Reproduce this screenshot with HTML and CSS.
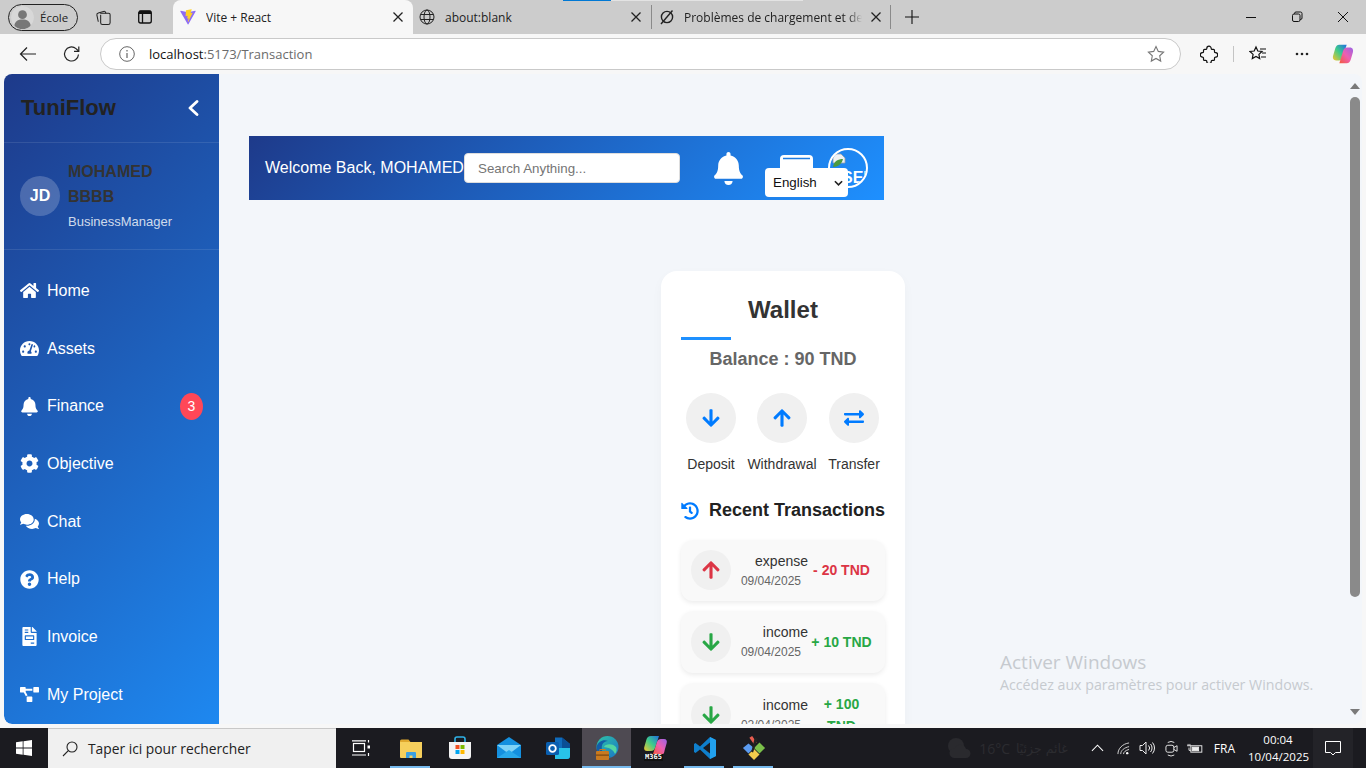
FILE: index.html
```html
<!DOCTYPE html>
<html lang="en">
<head>
  <meta charset="UTF-8">
  <title>Vite + React</title>
  <link rel="stylesheet" href="styles.css">
</head>
<body>
  <svg class="sprite" width="0" height="0">
    <symbol id="arrow-up" viewBox="0 0 448 512"><path d="M34.9 289.5l-22.2-22.2c-9.4-9.4-9.4-24.6 0-33.9L207 39c9.4-9.4 24.6-9.4 33.9 0l194.3 194.3c9.4 9.4 9.4 24.6 0 33.9L413 289.4c-9.5 9.5-25 9.3-34.3-.4L264 168.6V456c0 13.3-10.7 24-24 24h-32c-13.3 0-24-10.7-24-24V168.6L69.2 289.1c-9.3 9.8-24.8 10-34.3.4z"/></symbol>
    <symbol id="arrow-down" viewBox="0 0 448 512"><path transform="rotate(180 224 256)" d="M34.9 289.5l-22.2-22.2c-9.4-9.4-9.4-24.6 0-33.9L207 39c9.4-9.4 24.6-9.4 33.9 0l194.3 194.3c9.4 9.4 9.4 24.6 0 33.9L413 289.4c-9.5 9.5-25 9.3-34.3-.4L264 168.6V456c0 13.3-10.7 24-24 24h-32c-13.3 0-24-10.7-24-24V168.6L69.2 289.1c-9.3 9.8-24.8 10-34.3.4z"/></symbol>
    <symbol id="bell" viewBox="0 0 448 512"><path d="M224 512c35.32 0 63.97-28.65 63.97-64H160.03c0 35.35 28.65 64 63.97 64zm215.39-149.71c-19.32-20.76-55.47-51.99-55.47-154.29 0-77.7-54.48-139.9-127.94-155.16V32c0-17.67-14.32-32-31.98-32s-31.98 14.33-31.98 32v20.84C118.56 68.1 64.08 130.3 64.08 208c0 102.3-36.15 133.53-55.47 154.29-6 6.45-8.66 14.16-8.61 21.71.11 16.4 12.98 32 32.1 32h383.8c19.12 0 32-15.6 32.1-32 .05-7.55-2.61-15.27-8.61-21.71z"/></symbol>
    <symbol id="close" viewBox="0 0 12 12"><path d="M1.5 1.5l9 9M10.5 1.5l-9 9" fill="none" stroke="currentColor" stroke-width="1.3"/></symbol>
  </svg>

  <div class="tabstrip">
    <div class="progress"><span class="progress-blue"></span><span class="progress-grey"></span></div>
    <div class="profile">
      <svg class="profile-pic" viewBox="0 0 24 24"><circle cx="12" cy="12" r="12" fill="#d8d8d8"/><circle cx="12" cy="9" r="4.6" fill="#777"/><path d="M3.5 21c0-5 4-7 8.5-7s8.5 2 8.5 7c-2 2-5 3-8.5 3s-6.5-1-8.5-3z" fill="#777"/></svg>
      <span>École</span>
    </div>
    <svg class="strip-icon collections" viewBox="0 0 18 18" fill="none" stroke="#222" stroke-width="1.1"><path d="M5.5 4.5h9a1.5 1.5 0 0 1 1.5 1.500v8.500a2 2 0 0 1-2 2H8a2 2 0 0 1-2-2V6"/><path d="M3.5 13.5L2 6.5c-.3-1.300.4-2 1.500-2.300L9 2.600c1-.3 2 .2 2.300 1.200l.3.800"/></svg>
    <svg class="strip-icon sidebar-toggle" viewBox="0 0 16 16" fill="none" stroke="#111" stroke-width="1.3"><rect x="1.7" y="2" width="12.6" height="12" rx="2"/><path d="M1.7 4.3h12.6M5.500 4.300V14"/><path d="M2 3h12" stroke-width="2.5"/></svg>

    <div class="tab tab-active">
      <svg class="favicon" viewBox="0 0 410 404"><path d="M399.6 59.5L215.1 389.4c-3.800 6.800-13.600 6.800-17.500.1L9.500 59.500c-4.200-7.400 2.100-16.300 10.400-14.800l184.700 33c1.200.2 2.400.2 3.600 0l180.800-33c8.300-1.500 14.600 7.300 10.600 14.800z" fill="#8d6cf6"/><path d="M292.9 1.6L156.4 28.3c-2.200.4-3.900 2.300-4 4.600l-8.400 142c-.2 3.300 2.900 5.900 6.100 5.200l38-8.800c3.600-.8 6.800 2.300 6.100 5.900l-11.300 55.300c-.8 3.700 2.700 6.900 6.300 5.800l23.500-7.100c3.600-1.100 7.100 2.100 6.300 5.800l-18 87c-1.100 5.400 6.100 8.400 9.100 3.700l2-3.100 111.400-222.300c1.900-3.700-1.300-8-5.400-7.200l-39.200 7.600c-3.700.700-6.800-2.700-5.800-6.300l25.600-88.700c1-3.600-2.100-7.100-5.800-6.300z" fill="#ffd028"/></svg>
      <span class="tab-title">Vite + React</span>
      <svg class="tab-close"><use href="#close"/></svg>
    </div>
    <div class="tab tab-second">
      <svg class="favicon" viewBox="0 0 16 16" fill="none" stroke="#222" stroke-width="1"><circle cx="8" cy="8" r="7"/><ellipse cx="8" cy="8" rx="3" ry="7"/><path d="M1.5 5.5h13M1.5 10.5h13"/></svg>
      <span class="tab-title">about:blank</span>
      <svg class="tab-close"><use href="#close"/></svg>
    </div>
    <div class="tab tab-third">
      <svg class="favicon" viewBox="0 0 16 16" fill="none" stroke="#222" stroke-width="1.4"><circle cx="8" cy="8" r="5.6"/><path d="M13.5 1.5L2 15"/></svg>
      <span class="tab-title tab-fade">Problèmes de chargement et de c</span>
      <svg class="tab-close"><use href="#close"/></svg>
    </div>
    <svg class="new-tab" viewBox="0 0 14 14" fill="none" stroke="#111" stroke-width="1.1"><path d="M7 0v14M0 7h14"/></svg>
    <div class="window-controls">
      <svg viewBox="0 0 12 12" fill="none" stroke="#111"><path d="M1 6.5h10"/></svg>
      <svg viewBox="0 0 12 12" fill="none" stroke="#111"><rect x="1.5" y="3" width="7.5" height="7.5" rx="1.5"/><path d="M3.5 3V2.500A1.500 1.500 0 0 1 5 1h4.500A1.500 1.500 0 0 1 11 2.500V7a1.500 1.500 0 0 1-1.500 1.500H9"/></svg>
      <svg viewBox="0 0 12 12" fill="none" stroke="#111"><path d="M1 1l10 10M11 1L1 11"/></svg>
    </div>
  </div>

  <div class="toolbar">
    <svg class="tool-icon back" viewBox="0 0 18 18" fill="none" stroke="#222" stroke-width="1.2"><path d="M17 9H1.5M8 2.5L1.5 9 8 15.5"/></svg>
    <svg class="tool-icon reload" viewBox="0 0 18 18" fill="none" stroke="#222" stroke-width="1.2"><path d="M15.5 9.5A7 7 0 1 1 13 3.6L15.5 6"/><path d="M15.8 1.5V6.3H11"/></svg>
    <div class="address">
      <svg class="info" viewBox="0 0 16 16" fill="none" stroke="#666"><circle cx="8" cy="8" r="7.3"/><path d="M8 7v5M8 4v1.5" stroke-width="1.2"/></svg>
      <span class="url"><span class="url-host">localhost</span>:5173/Transaction</span>
      <svg class="star" viewBox="0 0 18 18" fill="none" stroke="#777" stroke-width="1.1"><path d="M9 1.5l2.300 4.900 5.300.7-3.900 3.700 1 5.300L9 13.500l-4.700 2.600 1-5.300L1.400 7.100l5.300-.7z"/></svg>
    </div>
    <svg class="tool-icon extensions" viewBox="0 0 18 18" fill="none" stroke="#111" stroke-width="1.2"><path d="M6.800 3.400a2.200 2.200 0 1 1 4.400 0c0 .7.4 1 1 1h1.300a1 1 0 0 1 1 1v1.300c0 .6.300 1 1 1a2.200 2.200 0 1 1 0 4.400c-.7 0-1 .4-1 1v1.300a1 1 0 0 1-1 1h-1.300c-.6 0-1 .3-1 1a2.200 2.200 0 1 1-4.400 0c0-.7-.4-1-1-1H4.500a1 1 0 0 1-1-1v-1.300c0-.6-.3-1-1-1a2.200 2.200 0 1 1 0-4.400c.7 0 1-.4 1-1V5.400a1 1 0 0 1 1-1h1.300c.6 0 1-.3 1-1z"/></svg>
    <span class="tool-divider"></span>
    <svg class="tool-icon favorites" viewBox="0 0 18 18" fill="none" stroke="#111" stroke-width="1.2"><path d="M7 2l1.800 4 4.200.5-3.100 2.900.8 4.200L7 11.500l-3.700 2.100.8-4.200L1 6.500 5.200 6z"/><path d="M11 4h6M13 8h4M12 12h5"/></svg>
    <svg class="tool-icon dots" viewBox="0 0 14 4" fill="#222"><circle cx="2" cy="2" r="1.3"/><circle cx="7" cy="2" r="1.3"/><circle cx="12" cy="2" r="1.3"/></svg>
    <svg class="tool-icon copilot" viewBox="0 0 24 24">
      <defs>
        <linearGradient id="cop-a" x1="0" y1="1" x2="1" y2="0"><stop offset="0" stop-color="#f7c52c"/><stop offset=".5" stop-color="#3ecb8b"/><stop offset="1" stop-color="#1f6fe0"/></linearGradient>
        <linearGradient id="cop-b" x1="0" y1="1" x2="1" y2="0"><stop offset="0" stop-color="#f45a3c"/><stop offset=".5" stop-color="#ee5fb0"/><stop offset="1" stop-color="#9a63e6"/></linearGradient>
      </defs>
      <path d="M8 2h8l-4 13c-.7 2.300-2 4-4.500 4H4.500C1.500 19 .5 16.500 1.200 14L3.500 6C4.300 3.500 5.500 2 8 2z" fill="url(#cop-a)"/>
      <path d="M16 22H8l4-13c.7-2.300 2-4 4.500-4h3c3 0 4 2.500 3.300 5l-2.300 8C19.700 20.500 18.500 22 16 22z" fill="url(#cop-b)"/>
    </svg>
  </div>

  <div class="viewport">
    <div class="page">
      <aside class="sidebar">
        <div class="brand">
          <span class="brand-name">TuniFlow</span>
          <svg class="brand-toggle" viewBox="0 0 12 16" fill="none" stroke="#fff" stroke-width="2.8" stroke-linecap="round" stroke-linejoin="round"><path d="M10 1.5L3 8l7 6.500"/></svg>
        </div>
        <div class="user">
          <div class="user-avatar">JD</div>
          <div class="user-info">
            <div class="user-name">MOHAMED BBBB</div>
            <div class="user-role">BusinessManager</div>
          </div>
        </div>
        <nav class="nav">
          <a class="nav-item"><svg class="nav-icon" viewBox="0 0 576 512"><path d="M280.37 148.26L96 300.11V464a16 16 0 0 0 16 16l112.06-.29a16 16 0 0 0 15.92-16V368a16 16 0 0 1 16-16h64a16 16 0 0 1 16 16v95.64a16 16 0 0 0 16 16.05L464 480a16 16 0 0 0 16-16V300L295.67 148.26a12.19 12.19 0 0 0-15.3 0zM571.6 251.47L488 182.56V44.05a12 12 0 0 0-12-12h-56a12 12 0 0 0-12 12v72.61L318.47 43a48 48 0 0 0-61 0L4.34 251.47a12 12 0 0 0-1.6 16.9l25.5 31A12 12 0 0 0 45.15 301l235.22-193.74a12.19 12.19 0 0 1 15.3 0L530.9 301a12 12 0 0 0 16.9-1.6l25.5-31a12 12 0 0 0-1.7-16.93z"/></svg>Home</a>
          <a class="nav-item"><svg class="nav-icon" viewBox="0 0 576 512"><path d="M288 32C128.94 32 0 160.94 0 320c0 52.8 14.25 102.26 39.06 144.8 5.61 9.62 16.3 15.2 27.44 15.2h443c11.14 0 21.83-5.58 27.44-15.2C561.75 422.26 576 372.8 576 320c0-159.06-128.94-288-288-288zm0 64c14.71 0 26.58 10.13 30.32 23.65-1.11 2.26-2.64 4.23-3.45 6.67l-9.22 27.67c-5.13 3.49-10.97 6.01-17.64 6.01-17.67 0-32-14.33-32-32S270.33 96 288 96zM96 384c-17.67 0-32-14.33-32-32s14.33-32 32-32 32 14.33 32 32-14.33 32-32 32zm48-160c-17.67 0-32-14.33-32-32s14.33-32 32-32 32 14.33 32 32-14.33 32-32 32zm246.77-72.41l-61.33 184C343.13 347.33 352 364.54 352 384c0 11.72-3.38 22.55-8.88 32H232.88c-5.5-9.45-8.88-20.28-8.88-32 0-33.94 26.5-61.43 59.9-63.59l61.34-184.01c4.17-12.56 17.73-19.45 30.36-15.17 12.57 4.19 19.35 17.79 15.17 30.36zm14.66 57.2l15.52-46.55c3.47-1.29 7.13-2.23 11.05-2.23 17.67 0 32 14.33 32 32s-14.33 32-32 32c-11.38-.01-20.89-6.27-26.57-15.22zM480 384c-17.67 0-32-14.33-32-32s14.33-32 32-32 32 14.33 32 32-14.33 32-32 32z"/></svg>Assets</a>
          <a class="nav-item"><svg class="nav-icon"><use href="#bell"/></svg>Finance<span class="nav-badge">3</span></a>
          <a class="nav-item"><svg class="nav-icon" viewBox="0 0 512 512"><path d="M487.4 315.7l-42.6-24.6c4.3-23.2 4.3-47 0-70.2l42.6-24.6c4.9-2.8 7.1-8.6 5.5-14-11.1-35.6-30-67.8-54.7-94.6-3.8-4.1-10-5.1-14.8-2.3L380.8 110c-17.9-15.4-38.5-27.3-60.8-35.1V25.8c0-5.6-3.9-10.5-9.4-11.7-36.7-8.2-74.3-7.8-109.2 0-5.5 1.2-9.4 6.1-9.4 11.7V75c-22.2 7.9-42.8 19.8-60.8 35.1L88.7 85.5c-4.9-2.8-11-1.9-14.8 2.3-24.7 26.7-43.6 58.9-54.7 94.6-1.7 5.4.6 11.2 5.5 14L67.3 221c-4.3 23.2-4.3 47 0 70.2l-42.6 24.6c-4.9 2.8-7.1 8.6-5.5 14 11.1 35.6 30 67.8 54.7 94.6 3.8 4.1 10 5.1 14.8 2.3l42.6-24.6c17.9 15.4 38.5 27.3 60.8 35.1v49.2c0 5.6 3.9 10.5 9.4 11.7 36.7 8.2 74.3 7.8 109.2 0 5.5-1.2 9.4-6.1 9.4-11.7v-49.2c22.2-7.9 42.8-19.8 60.8-35.1l42.6 24.6c4.9 2.8 11 1.9 14.8-2.3 24.7-26.7 43.6-58.9 54.7-94.6 1.5-5.5-.7-11.3-5.6-14.1zM256 336c-44.1 0-80-35.9-80-80s35.9-80 80-80 80 35.9 80 80-35.9 80-80 80z"/></svg>Objective</a>
          <a class="nav-item"><svg class="nav-icon" viewBox="0 0 576 512"><path d="M416 192c0-88.4-93.1-160-208-160S0 103.6 0 192c0 34.3 14.1 65.9 38 92-13.4 30.2-35.5 54.2-35.8 54.5-2.2 2.3-2.8 5.7-1.5 8.7S4.8 352 8 352c36.6 0 66.9-12.3 88.7-25 32.2 15.7 70.3 25 111.3 25 114.9 0 208-71.6 208-160zm122 220c23.9-26 38-57.7 38-92 0-66.9-53.5-124.2-129.3-148.1.9 6.6 1.3 13.3 1.3 20.1 0 105.9-107.7 192-240 192-10.8 0-21.3-.8-31.7-1.9C207.8 439.6 281.8 480 368 480c41 0 79.1-9.2 111.3-25 21.8 12.7 52.1 25 88.7 25 3.2 0 6.1-1.9 7.3-4.8 1.3-2.9.7-6.3-1.5-8.7-.3-.3-22.4-24.2-35.8-54.5z"/></svg>Chat</a>
          <a class="nav-item"><svg class="nav-icon" viewBox="0 0 512 512"><path d="M504 256c0 136.997-111.043 248-248 248S8 392.997 8 256C8 119.083 119.043 8 256 8s248 111.083 248 248zM262.655 90c-54.497 0-89.255 22.957-116.549 63.758-3.536 5.286-2.353 12.415 2.715 16.258l34.699 26.31c5.205 3.947 12.621 3.008 16.665-2.122 17.864-22.658 30.113-35.797 57.303-35.797 20.429 0 45.698 13.148 45.698 32.958 0 14.976-12.363 22.667-32.534 33.976C247.128 238.528 216 254.941 216 296v4c0 6.627 5.373 12 12 12h56c6.627 0 12-5.373 12-12v-1.333c0-28.462 83.186-29.647 83.186-106.667 0-58.002-60.165-102-116.531-102zM256 338c-25.365 0-46 20.635-46 46 0 25.364 20.635 46 46 46s46-20.636 46-46c0-25.365-20.635-46-46-46z"/></svg>Help</a>
          <a class="nav-item"><svg class="nav-icon" viewBox="0 0 384 512"><path d="M288 256H96v64h192v-64zm89-151L279.1 7c-4.5-4.5-10.6-7-17-7H256v128h128v-6.1c0-6.3-2.5-12.4-7-16.9zm-153 31V0H24C10.7 0 0 10.7 0 24v464c0 13.3 10.7 24 24 24h336c13.3 0 24-10.7 24-24V160H248c-13.2 0-24-10.8-24-24zM64 72c0-4.42 3.58-8 8-8h80c4.42 0 8 3.58 8 8v16c0 4.42-3.58 8-8 8H72c-4.42 0-8-3.58-8-8V72zm0 64c0-4.42 3.58-8 8-8h80c4.42 0 8 3.58 8 8v16c0 4.42-3.58 8-8 8H72c-4.42 0-8-3.58-8-8v-16zm256 304c0 4.42-3.58 8-8 8h-80c-4.42 0-8-3.58-8-8v-16c0-4.42 3.58-8 8-8h80c4.42 0 8 3.58 8 8v16zm0-200v96c0 8.84-7.16 16-16 16H80c-8.84 0-16-7.16-16-16v-96c0-8.84 7.16-16 16-16h224c8.84 0 16 7.16 16 16z"/></svg>Invoice</a>
          <a class="nav-item"><svg class="nav-icon" viewBox="0 0 640 512"><path d="M384 320H256c-17.67 0-32 14.33-32 32v128c0 17.67 14.33 32 32 32h128c17.67 0 32-14.33 32-32V352c0-17.67-14.33-32-32-32zM192 32c0-17.67-14.33-32-32-32H32C14.33 0 0 14.33 0 32v128c0 17.67 14.33 32 32 32h95.72l73.16 128.04C211.98 300.98 232.4 288 256 288h.28L192 175.51V128h224V64H192V32zM608 0H480c-17.67 0-32 14.33-32 32v128c0 17.67 14.33 32 32 32h128c17.67 0 32-14.33 32-32V32c0-17.67-14.33-32-32-32z"/></svg>My Project</a>
        </nav>
      </aside>

      <main class="main">
        <header class="topbar">
          <span class="welcome">Welcome Back, MOHAMED</span>
          <input class="search" type="text" placeholder="Search Anything...">
          <svg class="topbar-bell"><use href="#bell"/></svg>
          <svg class="topbar-wallet" viewBox="0 0 33 26"><path d="M4 0h25a4 4 0 0 1 4 4v22H0V4a4 4 0 0 1 4-4z" fill="#fff"/><path d="M3 3.500h27" stroke="#1e7be0" stroke-width="1.5"/></svg>
          <div class="topbar-avatar">
            <svg class="broken-img" viewBox="0 0 16 16"><path d="M2 1h8l4 4v5H2z" fill="#eef1f4" stroke="#9aa0a6" stroke-width=".8"/><path d="M2 14c1-6 5-8 10-8-1 4-4 8-10 8z" fill="#4d9a3f"/></svg>
            <span class="avatar-alt">SEI</span>
          </div>
          <div class="lang-select"><span>English</span><svg viewBox="0 0 10 6" fill="none" stroke="#222" stroke-width="1.8"><path d="M1 1l4 4 4-4"/></svg></div>
        </header>

        <section class="wallet">
          <h2 class="wallet-title">Wallet</h2>
          <div class="wallet-rule"></div>
          <p class="balance">Balance : 90 TND</p>
          <div class="actions">
            <div class="action action-deposit">
              <span class="action-circle"><svg class="action-icon"><use href="#arrow-down"/></svg></span>
              <span class="action-label">Deposit</span>
            </div>
            <div class="action action-withdraw">
              <span class="action-circle"><svg class="action-icon"><use href="#arrow-up"/></svg></span>
              <span class="action-label">Withdrawal</span>
            </div>
            <div class="action action-transfer">
              <span class="action-circle"><svg class="action-icon" viewBox="0 0 512 512"><path d="M0 168v-16c0-13.255 10.745-24 24-24h360V80c0-21.367 25.899-32.042 40.971-16.971l80 80c9.372 9.373 9.372 24.569 0 33.941l-80 80C409.956 271.982 384 261.456 384 240v-48H24c-13.255 0-24-10.745-24-24zm488 152H128v-48c0-21.314-25.862-32.08-40.971-16.971l-80 80c-9.372 9.373-9.372 24.569 0 33.941l80 80C102.057 463.997 128 453.437 128 432v-48h360c13.255 0 24-10.745 24-24v-16c0-13.255-10.745-24-24-24z"/></svg></span>
              <span class="action-label">Transfer</span>
            </div>
          </div>
          <h3 class="recent">
            <svg class="recent-icon" viewBox="0 0 512 512"><path d="M504 255.531c.253 136.64-111.18 248.372-247.82 248.468-59.015.042-113.223-20.53-155.822-54.911-11.077-8.94-11.905-25.541-1.839-35.607l11.267-11.267c8.609-8.609 22.353-9.551 31.891-1.984C173.062 425.135 212.781 440 256 440c101.705 0 184-82.311 184-184 0-101.705-82.311-184-184-184-48.814 0-93.149 18.969-126.068 49.932l50.754 50.754c10.08 10.08 2.941 27.314-11.313 27.314H24c-8.837 0-16-7.163-16-16V38.627c0-14.254 17.234-21.393 27.314-11.314l49.372 49.372C129.209 34.136 189.552 8 256 8c136.81 0 247.747 110.78 248 247.531zm-180.912 78.784l9.823-12.63c8.138-10.463 6.253-25.542-4.21-33.679L288 256.349V152c0-13.255-10.745-24-24-24h-16c-13.255 0-24 10.745-24 24v135.651l65.409 50.874c10.463 8.137 25.541 6.253 33.679-4.21z"/></svg>
            Recent Transactions
          </h3>
          <div class="tx">
            <span class="tx-circle tx-red"><svg class="tx-icon"><use href="#arrow-up"/></svg></span>
            <div class="tx-details"><div class="tx-type">expense</div><div class="tx-date">09/04/2025</div></div>
            <div class="tx-amount tx-red">- 20 TND</div>
          </div>
          <div class="tx">
            <span class="tx-circle tx-green"><svg class="tx-icon"><use href="#arrow-down"/></svg></span>
            <div class="tx-details"><div class="tx-type">income</div><div class="tx-date">09/04/2025</div></div>
            <div class="tx-amount tx-green">+ 10 TND</div>
          </div>
          <div class="tx">
            <span class="tx-circle tx-green"><svg class="tx-icon"><use href="#arrow-down"/></svg></span>
            <div class="tx-details"><div class="tx-type">income</div><div class="tx-date">02/04/2025</div></div>
            <div class="tx-amount tx-green">+ 100 TND</div>
          </div>
        </section>

        <div class="watermark">
          <div class="watermark-title">Activer Windows</div>
          <div class="watermark-text">Accédez aux paramètres pour activer Windows.</div>
        </div>
      </main>

      <div class="scrollbar">
        <svg viewBox="0 0 10 6" fill="#7a7a7a"><path d="M5 0l5 6H0z"/></svg>
        <div class="scroll-track"><div class="scroll-thumb"></div></div>
        <svg viewBox="0 0 10 6" fill="#7a7a7a"><path d="M5 6L0 0h10z"/></svg>
      </div>
    </div>
  </div>

  <footer class="taskbar">
    <div class="start"><svg viewBox="0 0 16 16" fill="#fff"><path d="M0 2.300l6.700-1v6.300H0zM7.500 1.200L16 0v7.600H7.500zM0 8.400h6.700v6.300l-6.700-1zM7.500 8.400H16V16l-8.500-1.200z"/></svg></div>
    <div class="task-search">
      <svg viewBox="0 0 16 16" fill="none" stroke="#222" stroke-width="1.1"><circle cx="10" cy="6" r="5"/><path d="M6.300 9.700L1 15"/></svg>
      <span>Taper ici pour rechercher</span>
    </div>
    <div class="task-view"><svg viewBox="0 0 18 16" fill="none" stroke="#fff" stroke-width="1.2"><rect x="1.5" y="3.5" width="11" height="8"/><path d="M0 .8h14M0 15h14M16.500 0v2.500M16.500 13v3"/><rect x="15.5" y="5.5" width="2.5" height="3" fill="#fff" stroke="none"/></svg></div>

    <div class="task-app app-open">
      <svg viewBox="0 0 24 24"><path d="M1 5a1.500 1.500 0 0 1 1.500-1.500h7l2 2.500H1z" fill="#e0a82e"/><path d="M1 6h22v15a1 1 0 0 1-1 1H2a1 1 0 0 1-1-1z" fill="#f6cf5c"/><path d="M7 17a1 1 0 0 1 1-1h8a1 1 0 0 1 1 1v5h-3.500v-2.500h-3V22H7z" fill="#3c9fe0"/></svg>
    </div>
    <div class="task-app">
      <svg viewBox="0 0 24 24"><path d="M7 6V3a2 2 0 0 1 2-2h6a2 2 0 0 1 2 2v3" fill="none" stroke="#2fb3e8" stroke-width="1.6"/><path d="M1 6h22v14a3 3 0 0 1-3 3H4a3 3 0 0 1-3-3z" fill="#f4f4f4"/><rect x="7.5" y="9" width="4" height="4" fill="#f25022"/><rect x="12.5" y="9" width="4" height="4" fill="#7fba00"/><rect x="7.5" y="14" width="4" height="4" fill="#00a4ef"/><rect x="12.5" y="14" width="4" height="4" fill="#ffb900"/></svg>
    </div>
    <div class="task-app">
      <svg viewBox="0 0 24 24"><path d="M0 9l12-8 12 8v13H0z" fill="#1490df"/><path d="M0 9h24l-12 9z" fill="#7fd3f7"/><path d="M0 22l12-8 12 8z" fill="#28a8ea"/></svg>
    </div>
    <div class="task-app">
      <svg viewBox="0 0 24 24"><path d="M9 1.500h7L24 8v12a3 3 0 0 1-3 3H9z" fill="#0f6cbd"/><path d="M16 1.500L24 8v6H16z" fill="#0a4f96"/><path d="M9 12h15v8a3 3 0 0 1-3 3H9z" fill="#28c3e8"/><rect x="0" y="6" width="13" height="13" rx="1.5" fill="#0a5fb0"/><circle cx="6.5" cy="12.5" r="3.3" fill="none" stroke="#fff" stroke-width="1.8"/></svg>
    </div>
    <div class="task-app app-active">
      <svg viewBox="0 0 24 24">
        <defs><linearGradient id="edge-a" x1="0" y1="0" x2="1" y2="1"><stop offset="0" stop-color="#2ec4a6"/><stop offset="1" stop-color="#1a75c7"/></linearGradient></defs>
        <circle cx="12.5" cy="11" r="11" fill="url(#edge-a)"/>
        <path d="M1.500 11C3 5 9 3 13 5c-5 .5-7 4-6 9 .8 4 4 7 9 6.500-6 3-14 0-14.500-9.500z" fill="#135ea8"/>
        <path d="M9 11c1-3 8-4 12 0 1 2 1 5-1 7-1-3-4-6-11-7z" fill="#53d5a2"/>
        <rect x="1" y="15" width="13" height="9" rx="1" fill="#c97a20"/>
        <rect x="1" y="18.5" width="13" height="1.2" fill="#7a4610"/>
        <rect x="5" y="13.5" width="5" height="2" fill="none" stroke="#c97a20"/>
      </svg>
    </div>
    <div class="task-app">
      <svg class="m365-icon" viewBox="0 0 24 18"><path d="M7 0h8l-4 12c-.6 2-2 3-4 3H3c-2.500 0-3.300-2-2.700-4l2-7C3 1.500 4.500 0 7 0z" fill="url(#cop-a)"/><path d="M18 18H9l4-12c.6-2 2-3 4-3h3c2.500 0 3.300 2 2.700 4l-2 7C20 16.500 20.500 18 18 18z" fill="url(#cop-b)"/></svg>
      <span class="m365-label">M365</span>
    </div>
    <div class="task-app app-open">
      <svg viewBox="0 0 24 24"><path d="M17 1l6 3v16l-6 3L7 13.500 2.500 17 1 16V8l1.500-1L7 10.500z" fill="#0f7fcc"/><path d="M17 6.500L10 12l7 5.500z" fill="#1b1b1f"/><path d="M17 1l6 3v16l-6 3z" fill="#22a1ee"/></svg>
    </div>
    <div class="task-app app-open">
      <svg viewBox="0 0 26 26"><path d="M7 8l6 5-6 6-6-6z" fill="#5b9bf0"/><path d="M19 7l6 6-6 6-6-6z" fill="#7bc04a"/><path d="M13 14l6 6-6 6-6-6z" fill="#f2cd4d"/><path d="M8 2l3-2 5 7-3 2z" fill="#e85d50"/><path d="M14 1l3 2-5 15-2-1z" fill="#222"/></svg>
    </div>

    <div class="tray">
      <div class="weather">
        <svg viewBox="0 0 26 22" fill="#2a2a2e"><circle cx="10" cy="9" r="8"/><path d="M8 21a5 5 0 0 1 1-10 6 6 0 0 1 11 1 4.500 4.500 0 0 1 0 9z"/></svg>
        <span>16°C</span><span class="weather-ar" dir="rtl" lang="ar">غائم جزئيًا</span>
      </div>
      <svg class="tray-icon chevron" viewBox="0 0 14 8" fill="none" stroke="#fff" stroke-width="1.1"><path d="M1 7l6-6 6 6"/></svg>
      <svg class="tray-icon wifi" viewBox="0 0 14 14" fill="none" stroke="#ddd"><path d="M1 13C1 7 6 2 13 1M4 13c0-4 4-7 9-8M7 13c0-2 2-4 6-5"/><circle cx="11" cy="12" r="1.3" fill="#fff" stroke="none"/></svg>
      <svg class="tray-icon speaker" viewBox="0 0 16 14" fill="none" stroke="#eee"><path d="M1 4.500h2.500L7 1v12L3.500 9.500H1z"/><path d="M9.500 4.500a3.500 3.500 0 0 1 0 5M11.500 3a6 6 0 0 1 0 8M13.500 1.500a8.500 8.500 0 0 1 0 11"/></svg>
      <svg class="tray-icon meet" viewBox="0 0 14 18" fill="none" stroke="#eee"><rect x="1" y="5.5" width="8.5" height="7.5" rx="2"/><path d="M9.500 8L13 6v6l-3.500-2M3 2.500a6.500 6.500 0 0 1 7 0M3 16a6.500 6.500 0 0 0 7 0"/></svg>
      <svg class="tray-icon battery" viewBox="0 0 18 12" fill="none" stroke="#eee"><rect x="5" y="3" width="12" height="7"/><rect x="6.5" y="4.500" width="7" height="4" fill="#eee"/><path d="M1 3h4M2 1v2M4 1v2M3 5v3h2"/></svg>
      <span class="lang">FRA</span>
      <div class="clock"><div>00:04</div><div>10/04/2025</div></div>
      <div class="notify"><svg viewBox="0 0 16 16" fill="none" stroke="#fff"><path d="M.5 1.500h15v11h-5L8 15l-2.500-2.500h-5z"/></svg></div>
    </div>
  </footer>
</body>
</html>
```

FILE: styles.css
```css
* {
  box-sizing: border-box;
}

html, body {
  height: 100%;
}

body {
  margin: 0;
  height: 768px;
  overflow: hidden;
  display: flex;
  flex-direction: column;
  background-color: #f7f7f7;
  font-family: "Liberation Sans", Arial, sans-serif;
}

.sprite {
  position: absolute;
}

/* browser tabs */
.tabstrip {
  position: relative;
  height: 34px;
  flex: none;
  display: flex;
  align-items: center;
  background-color: #cccccc;
  font-family: "Open Sans", sans-serif;
  font-size: 12px;
  color: #222;
}

.progress {
  position: absolute;
  top: 0;
  left: 563px;
  display: flex;
  height: 1px;
}

.progress-blue {
  width: 48px;
  background-color: #0078d4;
}

.progress-grey {
  width: 192px;
  background-color: #e3e3e3;
}

.profile {
  margin-left: 8px;
  width: 70px;
  height: 27px;
  display: flex;
  align-items: center;
  gap: 6px;
  padding-left: 2px;
  border: 1px solid #222;
  border-radius: 14px;
  font-size: 11.5px;
}

.profile-pic {
  width: 23px;
  height: 23px;
  border-radius: 50%;
}

.strip-icon {
  width: 17px;
  height: 17px;
}

.collections {
  margin-left: 17px;
}

.sidebar-toggle {
  margin-left: 25px;
  width: 16px;
  height: 16px;
}

.tab {
  height: 34px;
  display: flex;
  align-items: center;
}

.tab-active {
  margin-left: 20px;
  width: 240px;
  padding-left: 7px;
  padding-right: 9px;
  background-color: #f7f7f7;
  border-radius: 8px 8px 0 0;
}

.tab-second {
  width: 239px;
  padding-left: 6px;
  padding-right: 9px;
  border-right: 1px solid #8a8a8a;
  height: 24px;
}

.tab-third {
  width: 239px;
  padding-left: 6px;
  padding-right: 8px;
  border-right: 1px solid #8a8a8a;
  height: 24px;
}

.favicon {
  flex: none;
  width: 16px;
  height: 16px;
}

.tab-title {
  flex: 1;
  min-width: 0;
  margin-left: 10px;
  white-space: nowrap;
  overflow: hidden;
}

.tab-third .favicon {
  margin-left: 1px;
}

.tab-third .tab-title {
  margin-left: 9px;
  margin-right: 8px;
}

.tab-fade {
  -webkit-mask-image: linear-gradient(to right, #000 92%, transparent);
  mask-image: linear-gradient(to right, #000 92%, transparent);
}

.tab-close {
  flex: none;
  width: 12px;
  height: 12px;
  color: #222;
}

.new-tab {
  margin-left: 14px;
  width: 14px;
  height: 14px;
}

.window-controls {
  margin-left: auto;
  display: flex;
}

.window-controls svg {
  width: 46px;
  height: 12px;
}

/* address bar row */
.toolbar {
  height: 39px;
  flex: none;
  display: flex;
  align-items: center;
  background-color: #f7f7f7;
}

.tool-icon {
  flex: none;
  width: 18px;
  height: 18px;
}

.back {
  margin-left: 19px;
}

.reload {
  margin-left: 26px;
}

.address {
  margin-left: 19px;
  width: 1081px;
  height: 32px;
  display: flex;
  align-items: center;
  padding: 0 15px 0 18px;
  background-color: #fff;
  border: 1px solid #c9c9c9;
  border-radius: 16px;
  font-family: "Open Sans", sans-serif;
  font-size: 13px;
  color: #6b6b6b;
}

.info {
  width: 16px;
  height: 16px;
}

.url {
  margin-left: 14px;
  flex: 1;
}

.url-host {
  color: #111;
}

.star {
  width: 18px;
  height: 18px;
}

.extensions {
  margin-left: 19px;
}

.tool-divider {
  margin-left: 15px;
  width: 1px;
  height: 16px;
  background-color: #c4c4c4;
}

.favorites {
  margin-left: 15px;
}

.dots {
  margin-left: 28px;
  width: 14px;
  height: 4px;
}

.copilot {
  margin-left: 23px;
  width: 22px;
  height: 22px;
}

/* the app inside the browser */
.viewport {
  height: 655px;
  flex: none;
  padding: 1px 4px 4px;
}

.page {
  height: 650px;
  display: flex;
  overflow: hidden;
  border-radius: 8px;
  background-color: #f3f6fa;
}

.sidebar {
  width: 215px;
  flex: none;
  background: linear-gradient(135deg, #1e3a8a, #1e88f0);
  color: #fff;
  border-radius: 0 0 0 8px;
}

.brand {
  height: 69px;
  display: flex;
  align-items: center;
  justify-content: space-between;
  padding: 0 20px 0 17px;
  border-bottom: 1px solid rgba(255, 255, 255, 0.1);
}

.brand-name {
  font-size: 22px;
  font-weight: bold;
  color: #222;
}

.brand-toggle {
  width: 12px;
  height: 16px;
}

.user {
  height: 107px;
  display: flex;
  align-items: center;
  gap: 8px;
  padding: 0 16px;
  border-bottom: 1px solid rgba(255, 255, 255, 0.1);
}

.user-avatar {
  flex: none;
  width: 40px;
  height: 40px;
  display: flex;
  align-items: center;
  justify-content: center;
  border-radius: 50%;
  background-color: rgba(255, 255, 255, 0.2);
  font-size: 16px;
  font-weight: bold;
}

.user-info {
  padding-bottom: 4px;
}

.user-name {
  font-size: 16px;
  line-height: 25px;
  font-weight: bold;
  color: #333;
}

.user-role {
  margin-top: 5px;
  font-size: 13px;
  line-height: 15px;
  color: rgba(255, 255, 255, 0.8);
}

.nav {
  padding-top: 12px;
}

.nav-item {
  height: 57.7px;
  display: flex;
  align-items: center;
  padding: 0 16px;
  font-size: 16px;
}

.nav-icon {
  flex: none;
  width: 19px;
  height: 19px;
  margin-right: 8px;
  fill: #fff;
}

.nav-badge {
  margin-left: auto;
  width: 23px;
  height: 27px;
  display: flex;
  align-items: center;
  justify-content: center;
  border-radius: 50%;
  background-color: #ff4757;
  font-size: 14px;
}

.main {
  position: relative;
  flex: 1;
  min-width: 0;
  display: flex;
  flex-direction: column;
  overflow: hidden;
  padding-top: 62px;
}

.topbar {
  position: relative;
  flex: none;
  margin-left: 30px;
  width: 635px;
  height: 64px;
  display: flex;
  align-items: center;
  padding-left: 16px;
  background: linear-gradient(135deg, #1e3a8a, #1e90ff);
  color: #fff;
}

.welcome {
  font-size: 16px;
  width: 199px;
  flex: none;
  white-space: nowrap;
}

.search {
  flex: none;
  width: 216px;
  height: 30px;
  padding: 0 13px;
  border: 1px solid #ddd;
  border-radius: 4px;
  font-family: "Liberation Sans", Arial, sans-serif;
  font-size: 13.33px;
}

.search::placeholder {
  color: #757575;
}

.topbar-bell {
  flex: none;
  margin-left: 34px;
  width: 29px;
  height: 33px;
  fill: #fff;
}

.topbar-wallet {
  flex: none;
  margin-left: 37px;
  width: 33px;
  height: 26px;
}

.topbar-avatar {
  flex: none;
  position: relative;
  margin-left: 15px;
  width: 40px;
  height: 40px;
  overflow: hidden;
  border: 2px solid #fff;
  border-radius: 50%;
}

.broken-img {
  position: absolute;
  top: 3px;
  left: 1px;
  width: 16px;
  height: 16px;
}

.avatar-alt {
  position: absolute;
  top: 19px;
  left: 12px;
  font-size: 16px;
  font-weight: bold;
  white-space: nowrap;
}

.lang-select {
  position: absolute;
  left: 516px;
  top: 32px;
  width: 83px;
  height: 29px;
  display: flex;
  align-items: center;
  justify-content: space-between;
  padding: 0 5px 0 8px;
  background-color: #fff;
  border-radius: 4px;
  color: #111;
  font-size: 13.33px;
}

.lang-select svg {
  width: 9px;
  height: 6px;
}

.wallet {
  flex: none;
  align-self: center;
  width: 244px;
  margin-top: 71px;
  margin-right: 1px;
  padding: 20px;
  background-color: #fff;
  border-radius: 16px;
  box-shadow: 0 4px 12px rgba(0, 0, 0, 0.03);
}

.wallet-title {
  margin: 5px 0 0;
  text-align: center;
  font-size: 24px;
  line-height: 28px;
  color: #333;
}

.wallet-rule {
  margin-top: 13px;
  width: 50px;
  height: 3px;
  background-color: #1e90ff;
}

.balance {
  margin: 9px 0 0;
  text-align: center;
  font-size: 18px;
  line-height: 21px;
  font-weight: bold;
  color: #666;
  white-space: nowrap;
}

.actions {
  margin-top: 23px;
  display: flex;
}

.action {
  display: flex;
  flex-direction: column;
  align-items: center;
  gap: 13px;
  flex: none;
}

.action-deposit {
  width: 60px;
}

.action-withdraw {
  width: 82px;
}

.action-transfer {
  width: 62px;
}

.action-circle {
  width: 50px;
  height: 50px;
  display: flex;
  align-items: center;
  justify-content: center;
  border-radius: 50%;
  background-color: #f0f0f0;
}

.action-icon {
  width: 20px;
  height: 20px;
  fill: #007bff;
}

.action-label {
  font-size: 14px;
  line-height: 16px;
  color: #333;
  white-space: nowrap;
}

.recent {
  margin: 28px 0 18.5px;
  display: flex;
  align-items: center;
  gap: 10px;
  font-size: 18px;
  line-height: 21px;
  color: #222;
  white-space: nowrap;
}

.recent-icon {
  flex: none;
  width: 18px;
  height: 18px;
  fill: #007bff;
}

.tx {
  min-height: 61.5px;
  display: flex;
  align-items: center;
  margin-bottom: 10px;
  padding: 10px 13px 10px 10px;
  background-color: #f9f9f9;
  border-radius: 12px;
  box-shadow: 0 2px 5px rgba(0, 0, 0, 0.08);
}

.tx-circle {
  flex: none;
  width: 40px;
  height: 40px;
  display: flex;
  align-items: center;
  justify-content: center;
  border-radius: 50%;
  background-color: #f0f0f0;
}

.tx-icon {
  width: 18px;
  height: 20px;
}

.tx-red {
  fill: #dc3545;
  color: #dc3545;
}

.tx-green {
  fill: #28a745;
  color: #28a745;
}

.tx-details {
  flex: 1;
  min-width: 0;
  padding-top: 1px;
  text-align: right;
  line-height: 20px;
}

.tx-type {
  font-size: 14px;
  color: #333;
}

.tx-date {
  margin-right: 7px;
  font-size: 12px;
  color: #666;
}

.tx-amount {
  flex: none;
  width: 61px;
  margin-left: 3px;
  text-align: center;
  font-size: 14px;
  line-height: 22px;
  font-weight: bold;
}

.watermark {
  position: absolute;
  left: 781px;
  top: 575px;
  font-family: "Open Sans", sans-serif;
  color: #c6cacf;
}

.watermark-title {
  font-size: 19px;
  line-height: 26px;
}

.watermark-text {
  font-size: 14.2px;
  line-height: 20px;
  white-space: nowrap;
}

.scrollbar {
  flex: none;
  width: 14px;
  display: flex;
  flex-direction: column;
  align-items: center;
  padding: 9px 0;
  background-color: #f3f6fa;
}

.scrollbar svg {
  flex: none;
  width: 10px;
  height: 6px;
}

.scroll-track {
  flex: 1;
  width: 10px;
  padding-top: 8px;
}

.scroll-thumb {
  height: 500px;
  background-color: #8a8a8a;
  border-radius: 5px;
}

/* windows taskbar */
.taskbar {
  height: 40px;
  flex: none;
  display: flex;
  align-items: stretch;
  background-color: #1b1b20;
  font-family: "Open Sans", sans-serif;
  color: #fff;
}

.start {
  width: 48px;
  display: flex;
  align-items: center;
  justify-content: center;
}

.start svg {
  width: 16px;
  height: 16px;
}

.task-search {
  width: 288px;
  display: flex;
  align-items: center;
  gap: 10px;
  padding-left: 14px;
  background-color: #f0f0f0;
  border-top: 1px solid #c8c8c8;
  color: #222;
  font-size: 13.8px;
}

.task-search svg {
  width: 16px;
  height: 16px;
}

.task-view {
  width: 50px;
  display: flex;
  align-items: center;
  justify-content: center;
}

.task-view svg {
  width: 18px;
  height: 16px;
}

.task-app {
  position: relative;
  width: 49px;
  display: flex;
  align-items: center;
  justify-content: center;
}

.task-app svg {
  width: 24px;
  height: 24px;
}

.app-open::after {
  content: "";
  position: absolute;
  left: 4px;
  right: 5px;
  bottom: 0;
  height: 2px;
  background-color: #76b9ed;
}

.app-active {
  background-color: #4e4a52;
}

.app-active::after {
  content: "";
  position: absolute;
  left: 0;
  right: 0;
  bottom: 0;
  height: 2px;
  background-color: #76b9ed;
}

.task-app .m365-icon {
  width: 24px;
  height: 18px;
  margin-bottom: 6px;
}

.m365-label {
  position: absolute;
  left: 13px;
  bottom: 7px;
  padding: 0 1px;
  background-color: #111;
  font-family: "DejaVu Sans Mono", monospace;
  font-size: 7px;
  font-weight: bold;
  line-height: 7px;
}

.tray {
  margin-left: auto;
  display: flex;
  align-items: center;
  font-size: 12px;
}

.weather {
  display: flex;
  align-items: center;
  gap: 6px;
  margin-right: 23.5px;
  font-size: 14px;
  color: #2c2c30;
}

.weather svg {
  width: 26px;
  height: 22px;
  margin-right: 1px;
}

.weather-ar {
  font-family: "DejaVu Sans", sans-serif;
  font-size: 12.5px;
}

.tray-icon {
  flex: none;
}

.chevron {
  width: 13px;
  height: 8px;
}

.wifi {
  margin-left: 13px;
  width: 13px;
  height: 13px;
}

.speaker {
  margin-left: 8.5px;
  width: 16px;
  height: 14px;
}

.meet {
  margin-left: 10.5px;
  width: 13px;
  height: 17px;
}

.battery {
  margin-left: 8px;
  width: 17px;
  height: 11px;
}

.lang {
  margin-left: 10.5px;
}

.clock {
  margin-left: 13px;
  width: 60px;
  text-align: center;
  line-height: 17px;
  font-size: 11.5px;
}

.notify {
  margin-left: 5px;
  width: 53px;
  align-self: stretch;
  display: flex;
  align-items: center;
  justify-content: center;
  background-color: #232328;
  border-right: 13px solid #1b1b20;
}

.notify svg {
  width: 16px;
  height: 16px;
}
```
